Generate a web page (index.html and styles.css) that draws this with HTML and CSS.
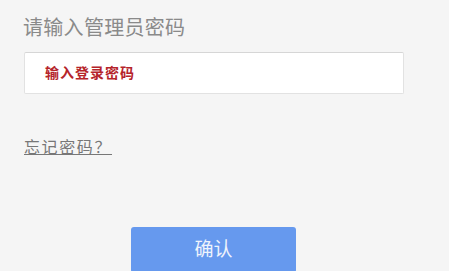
FILE: index.html
```html
<!DOCTYPE html>
<html lang="zh-CN">
<head>
<meta charset="utf-8">
<link rel="stylesheet" href="styles.css">
</head>
<body>
<div class="page">
  <h1 class="title">请输入管理员密码</h1>
  <div class="field">
    <span class="placeholder">输入登录密码</span>
  </div>
  <a class="forgot" href="#">忘记密码？</a>
  <div class="actions">
    <button class="confirm">确认</button>
  </div>
</div>
</body>
</html>
```
FILE: styles.css
```css
html, body {
  margin: 0;
  padding: 0;
  background: #f5f5f5;
}
.page {
  padding: 15px 24px 0 23px;
  font-family: "Noto Sans CJK SC", "Noto Sans", sans-serif;
  display: flex;
  flex-direction: column;
  align-items: flex-start;
}
.title {
  margin: 0;
  font-size: 20px;
  line-height: 24px;
  font-weight: normal;
  color: #8a8a8a;
  letter-spacing: 0.3px;
}
.field {
  margin-top: 13px;
  margin-left: 1px;
  box-sizing: border-box;
  width: 380px;
  height: 42px;
  background: #fff;
  border: 1px solid #e2e2e2;
  border-top-color: #d6d6d6;
  border-radius: 2px;
  display: flex;
  align-items: center;
  padding: 0 0 3px 20px;
}
.placeholder {
  font-size: 14px;
  font-weight: bold;
  color: #b5242a;
  letter-spacing: 1px;
}
.forgot {
  margin-top: 41px;
  margin-left: 1px;
  font-size: 16px;
  line-height: 22px;
  color: #777;
  text-decoration: underline;
  letter-spacing: 1.6px;
}
.actions {
  align-self: stretch;
  margin-top: 70px;
  padding-left: 108px;
}
.confirm {
  width: 165px;
  height: 46px;
  border: none;
  border-radius: 3px;
  background: #6699ee;
  color: #eef3fc;
  font-family: "Noto Sans CJK SC", sans-serif;
  font-size: 19px;
  padding: 0 0 6px 0;
}
```
